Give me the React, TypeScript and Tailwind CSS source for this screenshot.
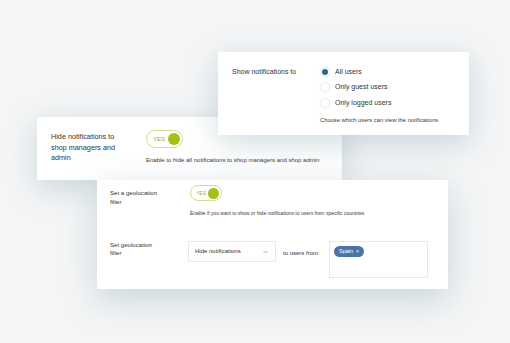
import React from 'react'

const font = { fontFamily: '"Liberation Sans", Arial, sans-serif' }

const Toggle = ({ big }: { big?: boolean }) => (
    <div className={big
        ? "flex items-center justify-between w-[37px] h-[18px] rounded-full border-[1.5px] border-[#d3dd8e] bg-white pl-[6px] pr-[2px]"
        : "flex items-center justify-between w-[32px] h-[16px] rounded-full border-[1.5px] border-[#d3dd8e] bg-white pl-[5px] pr-[2px]"}>
        <span className={big ? "text-[6px] leading-none text-[#9ab42a]" : "text-[5px] leading-none text-[#9ab42a]"}>YES</span>
        <span className={big ? "w-[12px] h-[12px] rounded-full bg-[#a6bf14]" : "w-[11px] h-[11px] rounded-full bg-[#a6bf14]"} />
    </div>
)

const Radio = ({ checked, label }: { checked?: boolean, label: string }) => (
    <div className="flex items-center h-[15.5px]">
        <span className="w-[10px] h-[10px] rounded-full bg-white border border-[#eceeef] shadow-[0_0_2px_rgba(0,0,0,0.08)] flex items-center justify-center">
            {checked && <span className="w-[6px] h-[6px] rounded-full bg-[#2c6a8c]" />}
        </span>
        <span className="ml-[5px] text-[7px] text-[#333]">{label}</span>
    </div>
)

const App: React.FC = () => {
    return (
        <div className="relative w-[510px] h-[343px] overflow-hidden bg-[#f4f5f6]" style={font}>
            {/* middle left card */}
            <div className="absolute left-[37px] top-[117px] w-[305px] h-[63px] bg-white shadow-[0_8px_30px_rgba(110,145,160,0.32)] flex pl-[14px] pt-[13px]">
                <div className="w-[95px] pt-[2px] text-[7.25px] leading-[10.5px] text-[#333]">
                    Hide notifications to<br />shop managers and<br />admin
                </div>
                <div className="flex flex-col">
                    <Toggle big />
                    <div className="mt-[9px] text-[6px] leading-[7px] text-[#3a3a3a]">Enable to hide all notifications to shop managers and shop admin</div>
                </div>
            </div>

            {/* top right card */}
            <div className="absolute left-[218px] top-[52px] w-[251px] h-[83px] bg-white shadow-[0_8px_30px_rgba(110,145,160,0.32)] flex pl-[14px] pt-[12px]">
                <div className="w-[89px] text-[7px] leading-[15.5px] text-[#333]">Show notifications to</div>
                <div className="flex flex-col -ml-[1px]">
                    <Radio checked label="All users" />
                    <Radio label="Only guest users" />
                    <Radio label="Only logged users" />
                    <div className="mt-[6px] text-[5.8px] leading-[7px] text-[#3a3a3a]">Choose which users can view the notifications</div>
                </div>
            </div>

            {/* bottom card */}
            <div className="absolute left-[97px] top-[180px] w-[351px] h-[109px] bg-white shadow-[0_10px_32px_rgba(110,145,160,0.32)] pl-[13px] pt-[5px] flex flex-col">
                <div className="flex">
                    <div className="w-[80px] pt-[3px] text-[6.1px] leading-[9px] text-[#333]">
                        Set a geolocation<br />filter
                    </div>
                    <div className="flex flex-col">
                        <Toggle />
                        <div className="mt-[9px] text-[5px] leading-[6px] text-[#3a3a3a]">Enable if you want to show or hide notifications to users from specific countries</div>
                    </div>
                </div>
                <div className="flex mt-[25px]">
                    <div className="w-[78px] text-[6.1px] leading-[8px] text-[#333]">
                        Set geolocation<br />filter
                    </div>
                    <div className="w-[88px] h-[21px] border border-[#e6e8ea] flex items-center justify-between pl-[6px] pr-[7px]">
                        <span className="text-[6px] text-[#333]">Hide notifications</span>
                        <svg width="5" height="4" viewBox="0 0 5 4" fill="none"><path d="M0.5 1 L2.5 3 L4.5 1" stroke="#888" strokeWidth="0.7" /></svg>
                    </div>
                    <div className="ml-[7px] w-[46px] pt-[9px] text-[6px] leading-[7px] text-[#333]">to users from:</div>
                    <div className="w-[99px] h-[37px] border border-[#e6e8ea] flex items-start pl-[4px] pt-[4px]">
                        <div className="flex items-center h-[11px] px-[5px] rounded-full bg-[#4d74a8] text-white text-[5.5px] leading-none">
                            Spain <span className="ml-[3px] text-[5px]">×</span>
                        </div>
                    </div>
                </div>
            </div>
        </div>
    )
}

export default App
